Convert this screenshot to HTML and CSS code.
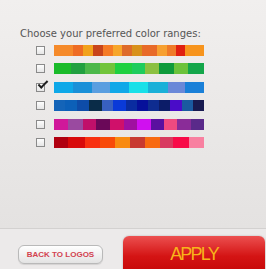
FILE: index.html
```html
<!DOCTYPE html>
<html lang="en">
<head>
    <meta charset="UTF-8">
    <meta name="viewport" content="width=device-width, initial-scale=1.0">
    <title>Color ranges</title>
    <link rel="stylesheet" href="styles.css">
</head>
<body>
    <div class="picker">
        <p class="picker-title">Choose your preferred color ranges:</p>
        <ul class="ranges">
            <li class="range">
                <span class="check"></span>
                <div class="bar">
                    <span style="flex:19;background:#f58a2a"></span>
                    <span style="flex:10;background:#ee6c24"></span>
                    <span style="flex:10;background:#f2a21c"></span>
                    <span style="flex:10;background:#c8451b"></span>
                    <span style="flex:10;background:#f57b25"></span>
                    <span style="flex:9;background:#f7a62a"></span>
                    <span style="flex:10;background:#de6b2a"></span>
                    <span style="flex:10;background:#d8911b"></span>
                    <span style="flex:15;background:#e86a28"></span>
                    <span style="flex:10;background:#f7a030"></span>
                    <span style="flex:9;background:#ef7a28"></span>
                    <span style="flex:9;background:#e02010"></span>
                    <span style="flex:19;background:#f7941d"></span>
                </div>
            </li>
            <li class="range">
                <span class="check"></span>
                <div class="bar">
                    <span style="flex:17;background:#1bbb2a"></span>
                    <span style="flex:14;background:#22a040"></span>
                    <span style="flex:15;background:#4cb84a"></span>
                    <span style="flex:15;background:#72c43a"></span>
                    <span style="flex:17;background:#20d040"></span>
                    <span style="flex:13;background:#1ecc5c"></span>
                    <span style="flex:14;background:#8cc040"></span>
                    <span style="flex:15;background:#0f9a3a"></span>
                    <span style="flex:14;background:#6cc23a"></span>
                    <span style="flex:16;background:#14a64a"></span>
                </div>
            </li>
            <li class="range">
                <span class="check checked"></span>
                <div class="bar">
                    <span style="flex:19;background:#0ea8e8"></span>
                    <span style="flex:19;background:#1a90d8"></span>
                    <span style="flex:18;background:#5a9ee0"></span>
                    <span style="flex:19;background:#10a8e8"></span>
                    <span style="flex:19;background:#18e0e8"></span>
                    <span style="flex:20;background:#1ab0d8"></span>
                    <span style="flex:17;background:#6a88d8"></span>
                    <span style="flex:19;background:#1a80d8"></span>
                </div>
            </li>
            <li class="range">
                <span class="check"></span>
                <div class="bar">
                    <span style="flex:11;background:#1464b8"></span>
                    <span style="flex:12;background:#0c60b8"></span>
                    <span style="flex:12;background:#0e4ca8"></span>
                    <span style="flex:13;background:#0a2c48"></span>
                    <span style="flex:11;background:#3860c0"></span>
                    <span style="flex:13;background:#0a3ad8"></span>
                    <span style="flex:11;background:#0a2ca0"></span>
                    <span style="flex:11;background:#06109a"></span>
                    <span style="flex:11;background:#0e2c90"></span>
                    <span style="flex:11;background:#0c1c68"></span>
                    <span style="flex:12;background:#4a0cc8"></span>
                    <span style="flex:11;background:#1a5aa0"></span>
                    <span style="flex:11;background:#181a50"></span>
                </div>
            </li>
            <li class="range">
                <span class="check"></span>
                <div class="bar">
                    <span style="flex:14;background:#d0189a"></span>
                    <span style="flex:15;background:#9a4aa0"></span>
                    <span style="flex:13;background:#c0106a"></span>
                    <span style="flex:14;background:#6a0858"></span>
                    <span style="flex:14;background:#d0106a"></span>
                    <span style="flex:13;background:#a010a0"></span>
                    <span style="flex:14;background:#d010f0"></span>
                    <span style="flex:13;background:#5a10a0"></span>
                    <span style="flex:13;background:#f04a80"></span>
                    <span style="flex:14;background:#8a2c98"></span>
                    <span style="flex:13;background:#5a2a8a"></span>
                </div>
            </li>
            <li class="range">
                <span class="check"></span>
                <div class="bar">
                    <span style="flex:14;background:#b00010"></span>
                    <span style="flex:17;background:#d80a0a"></span>
                    <span style="flex:15;background:#f83010"></span>
                    <span style="flex:15;background:#f84a08"></span>
                    <span style="flex:15;background:#f88a10"></span>
                    <span style="flex:15;background:#c83a30"></span>
                    <span style="flex:15;background:#f86a10"></span>
                    <span style="flex:13;background:#d83a60"></span>
                    <span style="flex:16;background:#f80a48"></span>
                    <span style="flex:15;background:#f880a0"></span>
                </div>
            </li>
        </ul>
    </div>
    <div class="footer">
        <button type="button" class="back-btn">Back to logos</button>
        <button type="button" class="apply-btn">APPLY</button>
    </div>
</body>
</html>
```

FILE: styles.css
```css
html, body {
    margin: 0;
    padding: 0;
}
body {
    width: 266px;
    height: 269px;
    overflow: hidden;
    font-family: "DejaVu Sans", Verdana, sans-serif;
    background-color: #e6e4e3;
}
.picker {
    height: 228px;
    box-sizing: border-box;
    padding: 28px 0 0 20px;
    background: linear-gradient(#f1efee, #e4e2e1);
}
.picker-title {
    margin: 0;
    font-size: 10px;
    line-height: 12px;
    color: #555;
}
.ranges {
    list-style: none;
    margin: 5px 0 0 16px;
    padding: 0;
    display: flex;
    flex-direction: column;
    gap: 7.4px;
}
.range {
    display: flex;
    align-items: center;
    gap: 9px;
    height: 11px;
}
.check {
    position: relative;
    width: 7px;
    height: 7px;
    border: 1px solid #8a8a8a;
    background: linear-gradient(#fdfdfd, #e6e6e6);
}
.check.checked::after {
    content: "";
    position: absolute;
    left: 1px;
    top: -3px;
    width: 8px;
    height: 3px;
    border-left: 2px solid #1e1e1e;
    border-bottom: 2px solid #1e1e1e;
    transform: rotate(-45deg);
}
.bar {
    display: flex;
    width: 150px;
    height: 11px;
}
.footer {
    height: 41px;
    border-top: 1px solid #d3d1d0;
    background-color: #eceaea;
    display: flex;
    align-items: flex-start;
}
.back-btn {
    margin: 16px 0 0 18px;
    width: 85px;
    height: 19px;
    padding: 0;
    border: 1px solid #b9b9b9;
    border-radius: 6px;
    background: linear-gradient(#ffffff, #e3e3e3);
    box-shadow: 0 1px 1px rgba(0, 0, 0, 0.1);
    color: #d2424f;
    font-family: "Liberation Sans", Arial, sans-serif;
    font-size: 8px;
    font-weight: bold;
    text-transform: uppercase;
    cursor: pointer;
}
.apply-btn {
    margin: 7px 0 0 20px;
    width: 142px;
    height: 45px;
    padding: 0 0 9px 0;
    border: none;
    border-radius: 6px;
    background: linear-gradient(#ec5050, #d41414 45%, #bf0000);
    box-shadow: 0 0 2px rgba(0, 0, 0, 0.25);
    color: #f8b41a;
    font-family: "Liberation Sans", Arial, sans-serif;
    font-size: 18px;
    letter-spacing: -1.8px;
    cursor: pointer;
}
```
